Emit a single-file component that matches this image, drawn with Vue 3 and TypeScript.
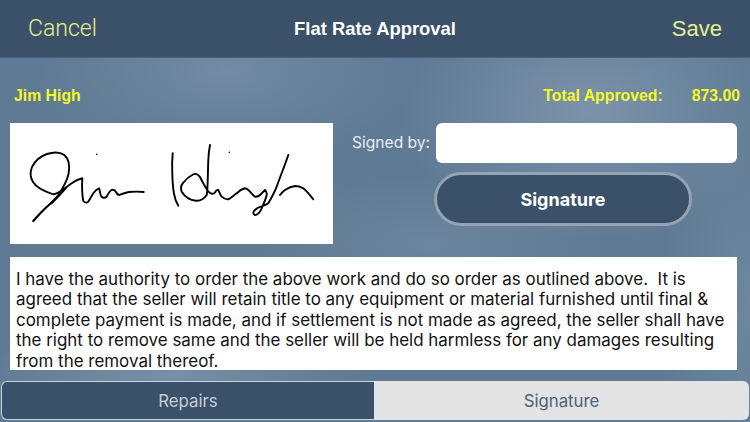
<script setup lang="ts">
const lines: string[] = [
  'I have the authority to order the above work and do so order as outlined above.  It is',
  'agreed that the seller will retain title to any equipment or material furnished until final &',
  'complete payment is made, and if settlement is not made as agreed, the seller shall have',
  'the right to remove same and the seller will be held harmless for any damages resulting',
  'from the removal thereof.',
]
</script>

<template>
  <div class="screen">
    <header class="nav">
      <span class="nav-btn cancel">Cancel</span>
      <span class="title">Flat Rate Approval</span>
      <span class="nav-btn save">Save</span>
    </header>

    <section class="totals">
      <span>Jim High</span>
      <div class="total-right">
        <span>Total Approved:</span>
        <span>873.00</span>
      </div>
    </section>

    <section class="sign-row">
      <div class="sig-box">
        <svg class="sig" viewBox="10 123 323 121" fill="none" stroke="#000" stroke-width="1.9" stroke-linecap="round" stroke-linejoin="round">
          <path d="M33.3 221 C38 214 52 203 58.3 195 C63 188 67 181 68.5 174 C70 166 69 159 64.3 155 C60 152 53 152 47 154 C41 156 35 161 32 167 C30 172 30 177 33 182 C36 187 43 191 53.3 194.3 C60 193.5 66 187 71.7 183.3 C75 181 79 179 82.3 178.3 C82 184 82 195 83.3 201 C85 203 87 203 88.3 201.7 C90 199 91.5 196 93.3 193.3 C95 191 97 189 99 188.3 C100 190 100 195 101.5 196.7 C103 198 105 198 106.7 196.7 C108 194 109.5 191 111.5 190 C113.5 189.5 115 190 116 192 C117 194 118 195 119.5 195 C122 194 125 192.7 129 192 C134 191.5 139 191.5 143.7 192" />
          <path d="M33.3 221 C40 214 46 206 52 203 C58 197 62 193 66 188" />
          <path d="M172.7 153.3 C172 160 172 167 172.3 173.3 C172.5 181 173 190 174.3 195 C175 199 176.5 203 178.3 205.7" />
          <path d="M210 145 C209 150 208.5 155 208.3 160 C208 167 208 174 207.7 180 C207.6 186 207.5 191 206.7 195 C204 199 201 201 196 200.7 C190 200 185 197 181.7 191.7 C180.5 188 181 185 183 183 C186 179 190 176 193 174.5 C196 173 198 174 200 177 C202 181 205 187 208 191 C210 193.5 213 195 215 192.5 C216 190.5 217 189.5 218.3 190 C219.5 192 220 195 221.7 196.7 C224 199 226 199.5 228.3 199.3 C231 198 234 195 236.7 193.3 C239 191 242 189 245 188.3 C247 188.5 248.5 190 250 191.7 C252 194 253.5 196 255 196.7 C257 197 259 196 260 195 C262 193 264 191 265 190 C266 191 267 193 266.7 195 C265.5 200 263 205 261.7 208.3 C260 212 257 215 255 215 C253 214.5 253 212.5 254 211 C255 210 256 209 257.5 208 C261 206.5 265 205.5 268.3 203.3 C272 197 275 191 276.7 186.7 C280 177 285 165 288.3 155" />
          <path d="M280 195 C281.5 193 283 191.5 285 190 C288 188 292 186.3 295 186 C298 186 301 187 303.3 188.3 C307 191 310 195.5 313.3 199.3" />
          <circle cx="96.7" cy="154.3" r="0.8" fill="#000" stroke="none" />
          <circle cx="229.3" cy="152.3" r="0.8" fill="#000" stroke="none" />
        </svg>
      </div>

      <div class="sign-side">
        <div class="signed-by">
          <label class="signed-label">Signed by:</label>
          <div class="field"></div>
        </div>
        <button class="sig-button" type="button">Signature</button>
      </div>
    </section>

    <section class="terms">
      <span v-for="(line, i) in lines" :key="i" class="term-line">{{ line }}</span>
    </section>

    <nav class="tabs">
      <div class="tab active">Repairs</div>
      <div class="tab">Signature</div>
    </nav>
  </div>
</template>

<style scoped>
.screen {
  width: 750px;
  height: 422px;
  overflow: hidden;
  display: flex;
  flex-direction: column;
  font-family: Inter, "Liberation Sans", sans-serif;
  background:
    radial-gradient(ellipse 190px 90px at 225px 70px, rgba(130, 152, 175, 0.55), transparent),
    radial-gradient(ellipse 190px 130px at 590px 110px, rgba(135, 158, 180, 0.7), transparent),
    radial-gradient(ellipse 170px 70px at 430px 245px, rgba(130, 152, 175, 0.4), transparent),
    radial-gradient(ellipse 190px 50px at 170px 375px, rgba(135, 158, 180, 0.6), transparent),
    radial-gradient(ellipse 90px 200px at 750px 300px, rgba(125, 148, 170, 0.5), transparent),
    #5f7a94;
}

.nav {
  height: 58px;
  flex: none;
  box-sizing: border-box;
  display: grid;
  grid-template-columns: 1fr auto 1fr;
  align-items: center;
  padding: 0 28px;
  background: #3b5169;
  border-bottom: 1px solid #4b627b;
  font-family: "Liberation Sans", Arial, sans-serif;
}

.nav-btn {
  color: #e6f08f;
  font-size: 22px;
  line-height: 58px;
}

.cancel {
  font-family: Roboto, "Liberation Sans", sans-serif;
  font-weight: 300;
  font-size: 23px;
}

.save {
  justify-self: end;
}

.title {
  color: #fff;
  font-weight: 700;
  font-size: 18.4px;
}

.totals {
  display: flex;
  justify-content: space-between;
  align-items: center;
  height: 20px;
  margin-top: 28px;
  padding: 0 10px 0 14px;
  color: #f4f82a;
  font-family: "Liberation Sans", Arial, sans-serif;
  font-weight: 700;
  font-size: 15.8px;
}

.total-right {
  display: flex;
  gap: 29px;
}

.sign-row {
  display: flex;
  margin-top: 17px;
  padding-left: 10px;
}

.sig-box {
  width: 323px;
  height: 121px;
  background: #fff;
}

.sig {
  display: block;
  width: 323px;
  height: 121px;
}

.sign-side {
  margin-left: 18px;
  display: flex;
  flex-direction: column;
}

.signed-by {
  display: flex;
  align-items: center;
}

.signed-label {
  width: 85px;
  padding-left: 1px;
  box-sizing: border-box;
  color: #e8edf2;
  font-size: 15.6px;
  line-height: 38px;
}

.field {
  width: 301px;
  height: 40px;
  background: #fff;
  border-radius: 6px;
}

.sig-button {
  width: 258px;
  height: 54px;
  margin-top: 9px;
  margin-left: 83px;
  box-sizing: border-box;
  background: #3b5169;
  border: 3px solid #94a4b5;
  border-radius: 27px;
  color: #fff;
  font-family: Inter, "Liberation Sans", sans-serif;
  font-weight: 700;
  font-size: 18px;
  padding: 0;
}

.terms {
  width: 727px;
  height: 113px;
  margin: 13px 0 0 10px;
  box-sizing: border-box;
  padding: 12px 6px 0;
  background: #fff;
  overflow: hidden;
  color: #111;
  font-family: Inter, "Liberation Sans", sans-serif;
  font-size: 16.95px;
  line-height: 20.4px;
}

.term-line {
  display: block;
  white-space: pre;
}

.tabs {
  display: flex;
  height: 39px;
  margin: 11px 1px 0;
}

.tab {
  flex: 1;
  display: flex;
  align-items: center;
  justify-content: center;
  background: #e3e3e3;
  color: #4d627a;
  font-size: 16.8px;
  border-radius: 0 6px 6px 0;
}

.tab.active {
  flex: none;
  width: 373px;
  box-sizing: border-box;
  background: #3b5169;
  color: #c3ced9;
  border: 1px solid #c9d3dc;
  border-right: none;
  border-radius: 6px 0 0 6px;
}
</style>
